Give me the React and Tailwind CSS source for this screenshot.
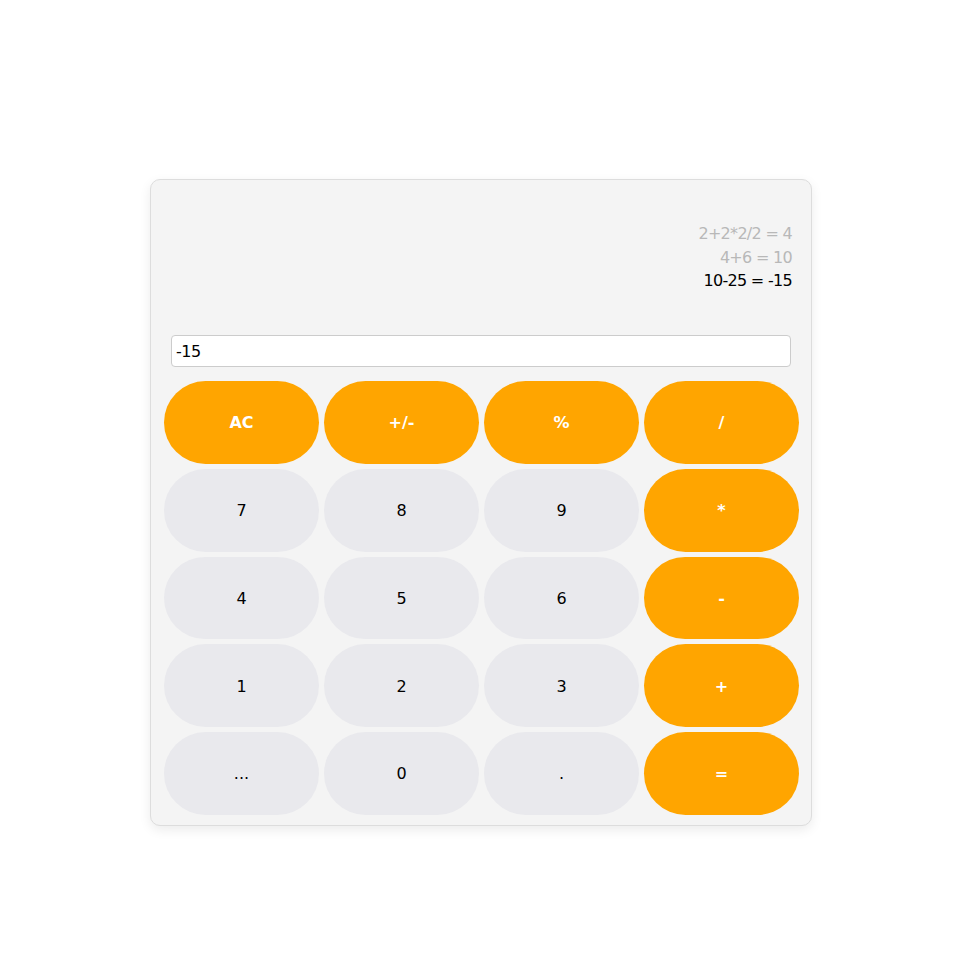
export default function App() {
  const history = [
    { text: '2+2*2/2 = 4', active: false },
    { text: '4+6 = 10', active: false },
    { text: '10-25 = -15', active: true },
  ];

  const buttons = [
    ['AC', true], ['+/-', true], ['%', true], ['/', true],
    ['7', false], ['8', false], ['9', false], ['*', true],
    ['4', false], ['5', false], ['6', false], ['-', true],
    ['1', false], ['2', false], ['3', false], ['+', true],
    ['...', false], ['0', false], ['.', false], ['=', true],
  ];

  return (
    <div
      className="min-h-screen bg-white pt-[179px] pl-[150px]"
      style={{ fontFamily: '"DejaVu Sans", Verdana, sans-serif' }}
    >
      <div className="w-[662px] h-[647px] bg-[#f4f4f4] border border-[#dddddd] rounded-[10px] shadow-[0_4px_12px_rgba(0,0,0,0.08)]">
        {/* History */}
        <div className="h-[155px] pt-[42px] pr-[19px] text-right text-[16px] leading-[23.5px] tracking-[-0.7px]">
          {history.map((h) => (
            <div key={h.text} className={h.active ? 'text-black' : 'text-[#b8b8b8]'}>
              {h.text}
            </div>
          ))}
        </div>

        {/* Input */}
        <div className="px-[20px]">
          <input
            readOnly
            value="-15"
            className="w-full h-[32px] bg-white border border-[#cccccc] rounded-[4px] px-[4px] text-[16px] tracking-[-0.5px] text-black outline-none"
            style={{ fontFamily: '"DejaVu Sans", Verdana, sans-serif' }}
          />
        </div>

        {/* Keypad */}
        <div className="ml-[13px] mt-[14px] w-[635px] grid grid-cols-4 gap-[5px]">
          {buttons.map(([label, accent]) => (
            <button
              key={label}
              className={`h-[82.75px] pt-[2px] rounded-full text-[16px] ${
                accent ? 'bg-[#ffa500] text-white font-bold' : 'bg-[#e9e9ed] text-black'
              }`}
            >
              {label}
            </button>
          ))}
        </div>
      </div>
    </div>
  );
}
